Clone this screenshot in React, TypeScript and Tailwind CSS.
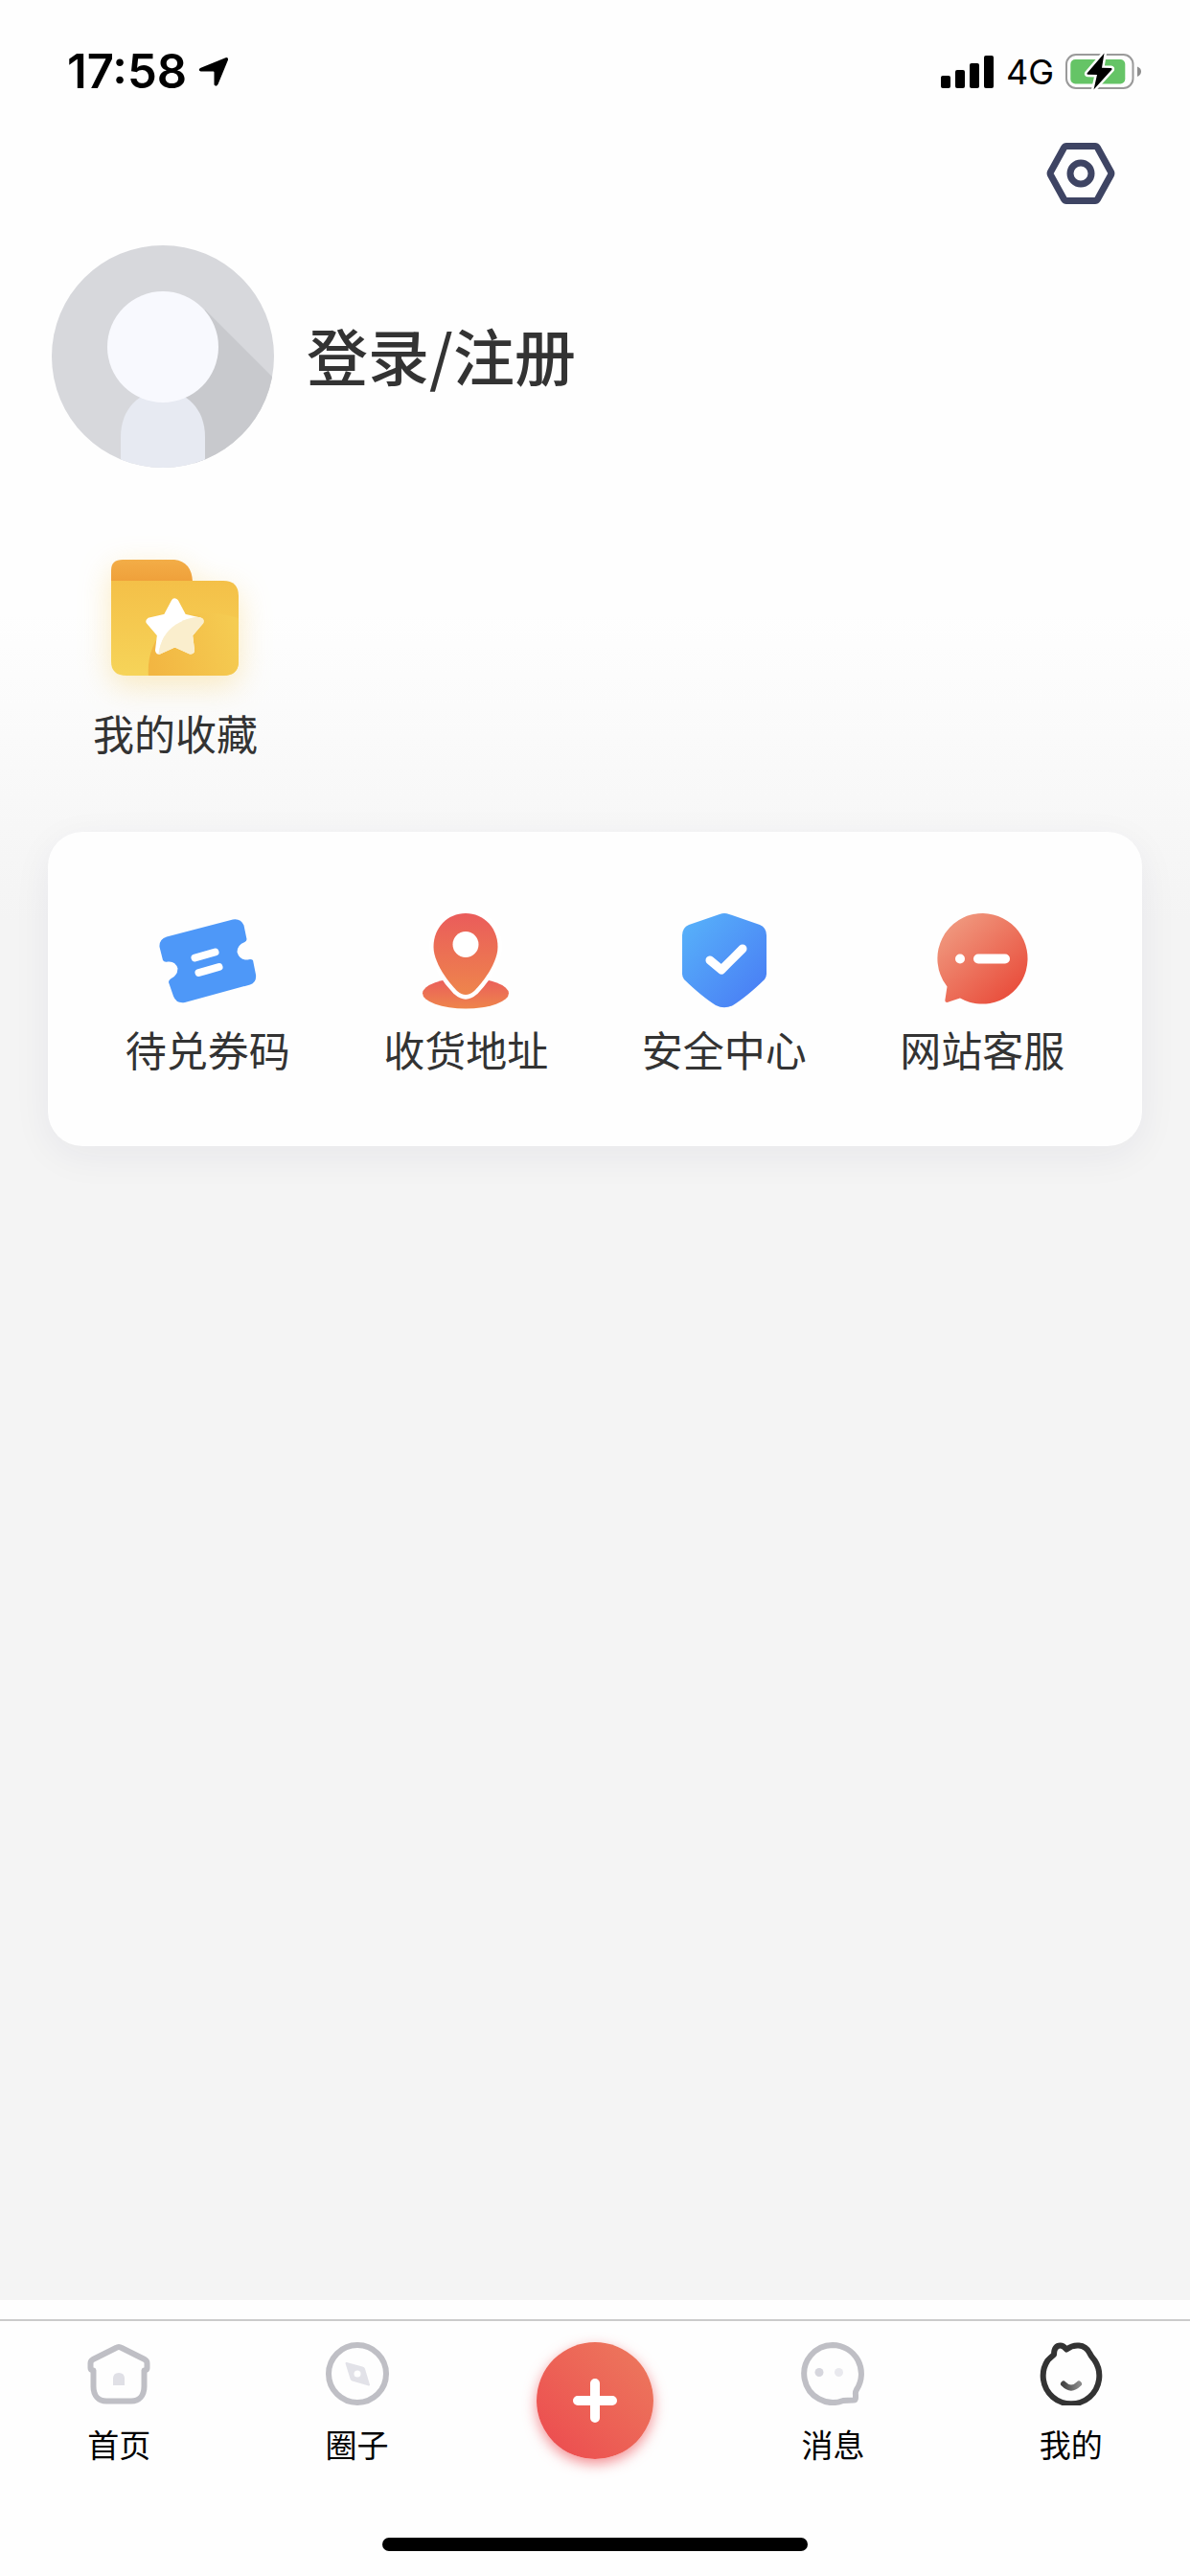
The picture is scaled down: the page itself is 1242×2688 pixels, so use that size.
import React from "react";

interface IconProps {
  className?: string;
}

interface MenuItem {
  label: string;
  href: string;
  icon: React.FC<IconProps>;
}

const LocationArrow: React.FC<IconProps> = ({ className }) => (
  <svg viewBox="0 0 32 32" className={className} aria-hidden="true">
    <path
      d="M2 12 28.5 1.2Q31.5.6 31 3.5L20.5 29Q18.5 32 16.5 29.5V16.500Q16.500 15.500 15.500 15.500H2.500Q-.8 14.500 2 12Z"
      fill="#000"
    />
  </svg>
);

const SignalBars: React.FC<IconProps> = ({ className }) => (
  <svg viewBox="0 0 56 34" className={className} aria-hidden="true">
    <rect x="0" y="21" width="10" height="13" rx="2" />
    <rect x="15" y="15" width="10" height="19" rx="2" />
    <rect x="30" y="8" width="10" height="26" rx="2" />
    <rect x="45" y="0" width="10" height="34" rx="2" />
  </svg>
);

const Battery: React.FC<IconProps> = ({ className }) => (
  <svg viewBox="0 0 80 40" className={className} aria-hidden="true">
    <rect
      x="1"
      y="2"
      width="69.5"
      height="35"
      rx="10"
      fill="none"
      stroke="#9a9a9a"
      strokeWidth="2"
    />
    <path d="M75 14.5Q79 16 79 19.5T75 25Z" fill="#8e8e8e" />
    <rect x="5.3" y="7" width="57" height="25.5" rx="5" fill="#65c466" />
    <path
      d="M40.5.5 22.5 21.5Q22 22.5 23.3 22.7L33 23 29.5 38.5 48.5 17.5Q49 16.2 47.5 16L38 15.7Z"
      fill="#000"
      stroke="#fff"
      strokeWidth="5"
      paintOrder="stroke"
      strokeLinejoin="round"
    />
  </svg>
);

const SettingsIcon: React.FC<IconProps> = ({ className }) => (
  <svg
    viewBox="0 0 72 66"
    className={className}
    fill="none"
    stroke="#3e4463"
    strokeWidth="7"
    strokeLinejoin="round"
    aria-hidden="true"
  >
    <path d="M21 4.5H51Q52.5 4.5 53.3 5.8L67.5 31.5Q68.3 33 67.5 34.5L53.3 60.2Q52.5 61.5 51 61.5H21Q19.5 61.5 18.7 60.2L4.5 34.5Q3.7 33 4.5 31.5L18.7 5.8Q19.5 4.5 21 4.5Z" />
    <circle cx="36" cy="33" r="11" />
  </svg>
);

const Avatar: React.FC<IconProps> = ({ className }) => (
  <svg viewBox="0 0 232 232" className={className} aria-hidden="true">
    <defs>
      <clipPath id="avatar-clip">
        <circle cx="116" cy="116" r="116" />
      </clipPath>
    </defs>
    <g clipPath="url(#avatar-clip)">
      <rect width="232" height="232" fill="#d7d8dc" />
      <path d="M160 67 240 147V232H150L130 150Z" fill="#c8c9cd" />
      <path
        d="M72 240V200C72 170 92 152 116 152S160 170 160 200V240Z"
        fill="#e7eaf2"
      />
      <circle cx="116" cy="106" r="58" fill="#f8f9fe" />
    </g>
  </svg>
);

const FolderIcon: React.FC<IconProps> = ({ className }) => (
  <svg viewBox="0 0 134 122" className={className} aria-hidden="true">
    <defs>
      <linearGradient id="folder-tab" x1="0" y1="0" x2="0" y2="1">
        <stop offset="0" stopColor="#f3ad47" />
        <stop offset="1" stopColor="#efa03a" />
      </linearGradient>
      <linearGradient id="folder-body" x1="0" y1="0" x2="0" y2="1">
        <stop offset="0" stopColor="#f4c048" />
        <stop offset="1" stopColor="#f6d459" />
      </linearGradient>
      <linearGradient id="folder-shade" x1="0" y1="0.6" x2="1" y2="0.4">
        <stop offset="0" stopColor="#f2b642" />
        <stop offset="1" stopColor="#f5cc52" />
      </linearGradient>
      <clipPath id="folder-clip">
        <path d="M0 22H117Q133 22 133 38V106Q133 121 117 121H16Q0 121 0 106Z" />
      </clipPath>
      <clipPath id="star-clip">
        <path d="M48 110C50 78 62 62 100 58V122H48Z" />
      </clipPath>
    </defs>
    <path d="M0 23V11Q0 0 12 0H66Q84 2 85 23Z" fill="url(#folder-tab)" />
    <g clipPath="url(#folder-clip)">
      <rect y="22" width="134" height="100" fill="url(#folder-body)" />
      <path
        d="M39 122C36 85 60 56 100 56C115 56 125 58 134 62V122Z"
        fill="url(#folder-shade)"
      />
    </g>
    <path
      d="M66.5 44.5 75 60.5 92.5 64.5 81 78 83 94.5 66.5 87 50 94.5 52 78 40.5 64.5 58 60.5Z"
      fill="#fff"
      stroke="#fff"
      strokeWidth="8"
      strokeLinejoin="round"
    />
    <path
      d="M66.5 44.5 75 60.5 92.5 64.5 81 78 83 94.5 66.5 87 50 94.5 52 78 40.5 64.5 58 60.5Z"
      fill="#faeecd"
      stroke="#faeecd"
      strokeWidth="8"
      strokeLinejoin="round"
      clipPath="url(#star-clip)"
    />
  </svg>
);

const TicketIcon: React.FC<IconProps> = ({ className }) => (
  <svg viewBox="0 0 104 104" className={className} aria-hidden="true">
    <path
      d="M9 27.5 78 9.5Q86 8 89.5 15.5L92.500 30Q92.500 32 90.500 33Q82.500 36 82.500 43.500Q85 52 93.500 51.500Q97 50.500 99 52L102 67Q103 75 96 77.500L28 96Q19 97.500 16 89.500L11 75Q11 72.500 13 71.500Q20.500 68 20.500 60.500Q18 52.500 10 53.500Q6.500 54.500 5 52L1.500 38Q1 30 9 27.500Z"
      fill="#4e98f8"
    />
    <path
      d="M38.5 49.5 59.5 43.5M42.5 65 63.5 59"
      stroke="#fff"
      strokeWidth="8"
      strokeLinecap="round"
    />
  </svg>
);

const AddressIcon: React.FC<IconProps> = ({ className }) => (
  <svg viewBox="0 0 104 104" className={className} aria-hidden="true">
    <defs>
      <linearGradient id="pin" x1="0" y1="0" x2="0" y2="1">
        <stop offset="0" stopColor="#ea5c5b" />
        <stop offset="1" stopColor="#ee854c" />
      </linearGradient>
    </defs>
    <ellipse cx="52" cy="86.5" rx="45" ry="16" fill="url(#pin)" />
    <path
      d="M52 3C33 3 18.500 18 18.500 38C18.500 54 33 74 43 84Q52 92 61 84C71 74 85.500 54 85.500 38C85.500 18 71 3 52 3Z"
      fill="url(#pin)"
      stroke="#fff"
      strokeWidth="9"
      paintOrder="stroke"
    />
    <circle cx="52" cy="35.5" r="13.5" fill="#fff" />
  </svg>
);

const ShieldIcon: React.FC<IconProps> = ({ className }) => (
  <svg viewBox="0 0 104 104" className={className} aria-hidden="true">
    <defs>
      <linearGradient id="shield" x1="0" y1="0" x2="1" y2="1">
        <stop offset="0" stopColor="#58b4fa" />
        <stop offset="1" stopColor="#4879f4" />
      </linearGradient>
    </defs>
    <path
      d="M47 4Q52 2 57 4L89 15Q96 18 96 26V66Q96 69.5 94 72C82 83.5 71 93 61 99Q52 103.5 43 99C33 93 22 83.5 10 72Q8 69.5 8 66V26Q8 18 15 15Z"
      fill="url(#shield)"
    />
    <path
      d="M37 52 49 62 71 40"
      fill="none"
      stroke="#fff"
      strokeWidth="9"
      strokeLinecap="round"
      strokeLinejoin="round"
    />
  </svg>
);

const ServiceIcon: React.FC<IconProps> = ({ className }) => (
  <svg viewBox="0 0 104 104" className={className} aria-hidden="true">
    <defs>
      <linearGradient id="service" x1="0.1" y1="0.1" x2="0.8" y2="0.9">
        <stop offset="0" stopColor="#f09a80" />
        <stop offset="1" stopColor="#e9503e" />
      </linearGradient>
    </defs>
    <path
      d="M53 3A47.3 47.3 0 1 1 29 91.5L15.5 96Q13.300 96 13.300 94L15.500 79.5A47.3 47.3 0 0 1 53 3Z"
      fill="url(#service)"
    />
    <circle cx="29" cy="50.5" r="5" fill="#fff" />
    <rect x="43" y="45.5" width="38" height="10" rx="5" fill="#fff" />
  </svg>
);

const HomeIcon: React.FC<IconProps> = ({ className }) => (
  <svg viewBox="0 0 66 66" className={className} aria-hidden="true">
    <path
      d="M30 6Q33 4 36 6L60 18Q62.5 19.5 62.5 22V27Q62.5 29 59.5 29.5V46C59.5 56 54 61.5 46 61.5H20C12 61.5 6.5 56 6.5 46V29.5Q3.5 29 3.5 27V22Q3.5 19.5 6 18Z"
      fill="none"
      stroke="#bfbfc5"
      strokeWidth="6"
      strokeLinejoin="round"
    />
    <path d="M27 45V38Q27 32 33 32T39 38V45Z" fill="#e0e0e6" />
  </svg>
);

const CircleIcon: React.FC<IconProps> = ({ className }) => (
  <svg viewBox="0 0 66 66" className={className} aria-hidden="true">
    <circle
      cx="33"
      cy="33"
      r="30"
      fill="none"
      stroke="#bfbfc5"
      strokeWidth="6"
    />
    <path
      d="M21.5 22 38 26.5Q39.5 27 40 28L45 44.5 28 39.5Q27 39 26.5 38Z"
      fill="#e2e2e8"
      stroke="#e2e2e8"
      strokeWidth="2"
      strokeLinejoin="round"
    />
    <circle cx="33" cy="33" r="3.5" fill="#fff" />
  </svg>
);

const MessageIcon: React.FC<IconProps> = ({ className }) => (
  <svg viewBox="0 0 66 66" className={className} aria-hidden="true">
    <path
      d="M33 3A30 30 0 0 1 58 49.5Q56.5 52 57 55V58Q57 60.5 54.5 60.5Q48 60.5 44 61A30 30 0 1 1 33 3Z"
      fill="none"
      stroke="#bfbfc5"
      strokeWidth="6"
      strokeLinejoin="round"
    />
    <circle cx="19" cy="31.5" r="4.5" fill="#d6d6dd" />
    <circle cx="39.5" cy="31.5" r="4.5" fill="#e9e9ee" />
  </svg>
);

const MineIcon: React.FC<IconProps> = ({ className }) => (
  <svg viewBox="0 0 66 66" className={className} aria-hidden="true">
    <defs>
      <linearGradient id="smile" x1="0" y1="0" x2="1" y2="0">
        <stop offset="0" stopColor="#444" />
        <stop offset="1" stopColor="#888" />
      </linearGradient>
    </defs>
    <path
      d="M15 13C15 6 18 3.5 21.500 3.5Q25 3.5 28 7.500C34 3 38 3.200 41 3.500C47 4 50 7 52 11Q53.500 14.500 57.5 19A29.3 29.3 0 1 1 8.5 19Q11.500 16 15 13Z"
      fill="none"
      stroke="#333"
      strokeWidth="6"
      strokeLinejoin="round"
    />
    <path
      d="M25 43.5Q33 51.5 41 43.5"
      fill="none"
      stroke="url(#smile)"
      strokeWidth="6"
      strokeLinecap="round"
    />
  </svg>
);

const services: MenuItem[] = [
  { label: "待兑券码", href: "#coupons", icon: TicketIcon },
  { label: "收货地址", href: "#address", icon: AddressIcon },
  { label: "安全中心", href: "#security", icon: ShieldIcon },
  { label: "网站客服", href: "#service", icon: ServiceIcon },
];

const leftTabs: MenuItem[] = [
  { label: "首页", href: "#home", icon: HomeIcon },
  { label: "圈子", href: "#circle", icon: CircleIcon },
];

const rightTabs: MenuItem[] = [
  { label: "消息", href: "#message", icon: MessageIcon },
  { label: "我的", href: "#mine", icon: MineIcon },
];

const StatusBar = () => (
  <div className="flex h-[132px] items-center justify-between pt-[18px] pr-[50px] pl-[70px] font-['Inter',sans-serif] text-black">
    <div className="flex items-center gap-3">
      <span className="text-[49px] leading-[56px] font-semibold">17:58</span>
      <LocationArrow className="h-8 w-8" />
    </div>
    <div className="flex items-center gap-3">
      <SignalBars className="h-[34px] w-14" />
      <span className="text-[36px] leading-[56px]">4G</span>
      <Battery className="h-10 w-20" />
    </div>
  </div>
);

const TabLink: React.FC<{ tab: MenuItem }> = ({ tab }) => {
  const Icon = tab.icon;

  return (
    <a href={tab.href} className="flex flex-col items-center gap-4">
      <Icon className="h-[66px] w-[66px]" />
      <span className="text-[33px] leading-[48px] text-black">
        {tab.label}
      </span>
    </a>
  );
};

const TabBar = () => (
  <footer className="bg-[#fefefe] pt-5">
    <nav className="grid h-[228px] grid-cols-5 items-start border-t-2 border-[#cbcbcb] pt-[22px]">
      {leftTabs.map((tab) => (
        <TabLink key={tab.label} tab={tab} />
      ))}
      <button
        type="button"
        aria-label="发布"
        className="flex h-[122px] w-[122px] items-center justify-center justify-self-center rounded-full bg-linear-to-tr from-[#ec474e] to-[#ec7a5e] shadow-[0_5px_14px_rgba(236,71,78,0.6)]"
      >
        <svg viewBox="0 0 46 46" className="h-[46px] w-[46px]">
          <path
            d="M23 5V41M5 23H41"
            stroke="#fff"
            strokeWidth="10"
            strokeLinecap="round"
          />
        </svg>
      </button>
      {rightTabs.map((tab) => (
        <TabLink key={tab.label} tab={tab} />
      ))}
    </nav>
    {/* Home indicator */}
    <div className="flex h-10 justify-center">
      <div className="h-[14px] w-[444px] rounded-full bg-black" />
    </div>
  </footer>
);

export default function App() {
  return (
    <div className="flex min-h-screen flex-col bg-[#f4f4f4] font-['Noto_Sans_CJK_SC',sans-serif] text-[#333]">
      <main className="flex-1 bg-[linear-gradient(to_bottom,#fefefe_640px,#f4f4f4_960px)]">
        <StatusBar />

        <div className="flex justify-end px-[78px] pt-4">
          <button type="button" aria-label="设置">
            <SettingsIcon className="h-[66px] w-[72px]" />
          </button>
        </div>

        <a
          href="#login"
          className="flex items-center gap-[34px] px-[54px] pt-[42px]"
        >
          <Avatar className="h-[232px] w-[232px]" />
          <span className="pb-1.5 text-[64px] leading-[90px] font-medium">
            登录/注册
          </span>
        </a>

        <div className="px-[50px] pt-24">
          <a
            href="#favorites"
            className="flex w-[266px] flex-col items-center gap-7"
          >
            <FolderIcon className="h-[122px] w-[134px] drop-shadow-[0_10px_16px_rgba(246,200,80,0.35)]" />
            <span className="text-[43px] leading-[60px]">我的收藏</span>
          </a>
        </div>

        <section className="mx-[50px] mt-[74px] grid grid-cols-4 rounded-[36px] bg-[#fefefe] px-8 pt-[82px] pb-[72px] shadow-[0_10px_40px_rgba(40,40,80,0.06)]">
          {services.map((item) => {
            const Icon = item.icon;

            return (
              <a
                key={item.label}
                href={item.href}
                className="flex flex-col items-center gap-[10px]"
              >
                <Icon className="h-[104px] w-[104px]" />
                <span className="text-[43px] leading-[60px]">{item.label}</span>
              </a>
            );
          })}
        </section>
      </main>

      <TabBar />
    </div>
  );
}
